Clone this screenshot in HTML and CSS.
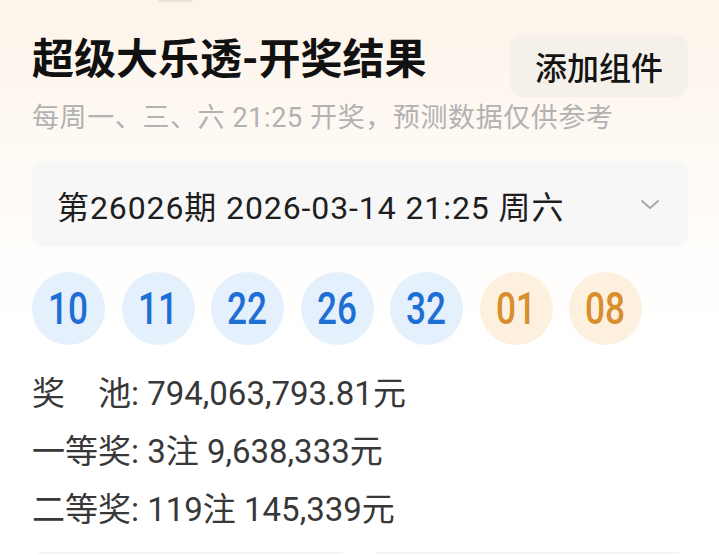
FILE: index.html
```html
<!DOCTYPE html>
<html lang="zh-CN">
<head>
<meta charset="utf-8">
<title>超级大乐透-开奖结果</title>
<link rel="stylesheet" href="styles.css">
</head>
<body>
<div class="page">
  <div class="handle"></div>
  <div class="header">
    <div class="title">超级大乐透-开奖结果</div>
    <div class="add-btn">添加组件</div>
  </div>
  <div class="subtitle">每周一、三、六 21:25 开奖，预测数据仅供参考</div>

  <div class="select">
    <span class="select-text">第26026期 2026-03-14 21:25 周六</span>
    <svg class="chevron" width="20" height="12" viewBox="0 0 20 12"><path d="M2 2 L10 9 L18 2" fill="none" stroke="#a6a6a6" stroke-width="1.8" stroke-linecap="round" stroke-linejoin="round"/></svg>
  </div>

  <div class="balls">
    <div class="ball red"><span>10</span></div>
    <div class="ball red"><span>11</span></div>
    <div class="ball red"><span>22</span></div>
    <div class="ball red"><span>26</span></div>
    <div class="ball red"><span>32</span></div>
    <div class="ball blue"><span>01</span></div>
    <div class="ball blue"><span>08</span></div>
  </div>

  <div class="prizes">
    <div class="prize"><span class="label"><span>奖</span><span>池</span></span>: 794,063,793.81元</div>
    <div class="prize"><span class="label"><span>一等奖</span></span>: 3注 9,638,333元</div>
    <div class="prize"><span class="label"><span>二等奖</span></span>: 119注 145,339元</div>
  </div>

  <div class="cards">
    <div class="card"></div>
    <div class="card"></div>
  </div>
</div>
</body>
</html>
```
FILE: styles.css
```css
html, body {
  margin: 0;
  padding: 0;
}
body {
  width: 719px;
  height: 555px;
  overflow: hidden;
  background: linear-gradient(180deg, #fdf4ea 0px, #fef9f3 140px, #fffefd 280px, #ffffff 360px);
  font-family: Roboto, "Noto Sans CJK SC", sans-serif;
}
.page {
  padding: 0 31px 0 32px;
}
.handle {
  width: 35px;
  height: 2px;
  margin-left: 126px;
  background: #e6e2dd;
  border-radius: 0 0 2px 2px;
}
.header {
  display: flex;
  justify-content: space-between;
  align-items: flex-start;
  margin-top: 33px;
}
.title {
  font-size: 42px;
  line-height: 50px;
  font-weight: 700;
  color: #111111;
}
.add-btn {
  width: 178px;
  height: 62px;
  border-radius: 13px;
  background: #f5f0ea;
  display: flex;
  align-items: center;
  justify-content: center;
  font-size: 32px;
  font-weight: 500;
  color: #141414;
}
.subtitle {
  margin-top: 3px;
  font-size: 27px;
  line-height: 36px;
  letter-spacing: 0.6px;
  color: #b2b2b2;
}
.select {
  margin-top: 26px;
  height: 85px;
  border-radius: 12px;
  background: #f7f7f7;
  display: flex;
  align-items: center;
  justify-content: space-between;
  padding: 0 28px 0 25px;
}
.select-text {
  font-size: 32px;
  letter-spacing: 0.9px;
  color: #1e1e1e;
}
.chevron {
  display: block;
}
.balls {
  margin-top: 25px;
  display: flex;
  gap: 16.5px;
}
.ball {
  width: 73px;
  height: 73px;
  border-radius: 50%;
  display: flex;
  align-items: center;
  justify-content: center;
}
.ball span {
  display: inline-block;
  font-size: 44px;
  font-weight: 500;
  line-height: 1;
  transform: scaleX(0.8);
}
.ball.red {
  background: #e5f0fd;
  color: #1e6fd4;
}
.ball.blue {
  background: #fdf0df;
  color: #d88e2c;
}
.prizes {
  margin-top: 20px;
}
.prize {
  font-size: 33px;
  line-height: 58px;
  color: #383838;
}
.label {
  display: inline-flex;
  width: 3em;
  justify-content: space-between;
}
.cards {
  margin: 13px 8px 0 6px;
  display: grid;
  grid-template-columns: 1fr 1fr;
  gap: 32px;
}
.card {
  height: 2px;
  background: #f4f4f4;
  border-radius: 2px 2px 0 0;
}
```
